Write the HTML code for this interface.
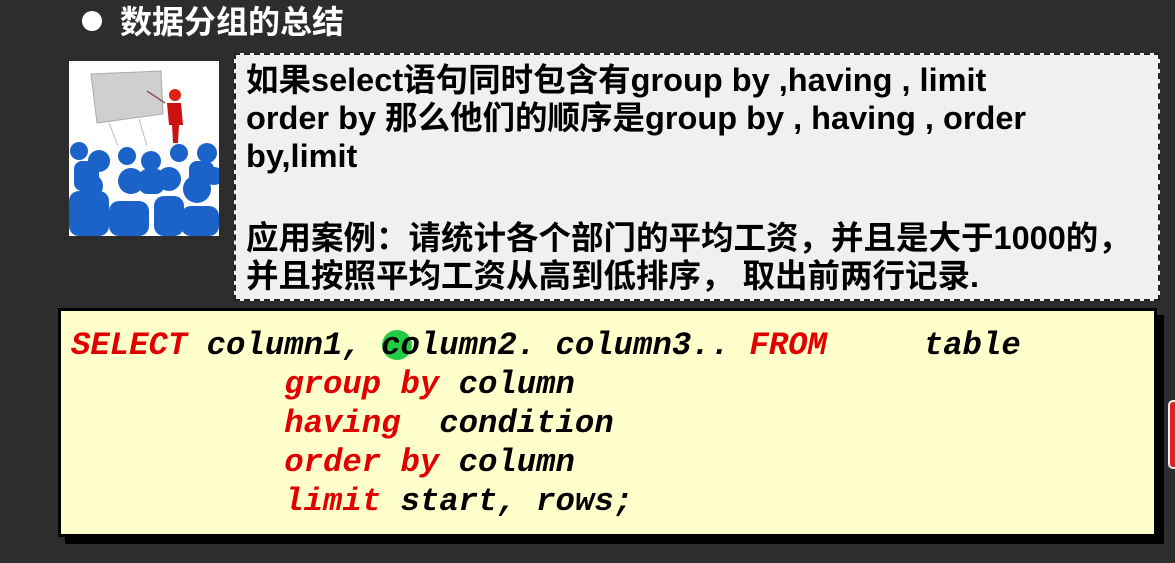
<!DOCTYPE html>
<html><head><meta charset="utf-8"><style>
*{margin:0;padding:0}
body{width:1175px;height:563px;overflow:hidden;background:#2d2d2d;position:relative;font-family:"Liberation Sans","Noto Sans CJK SC",sans-serif}
.title{position:absolute;left:82px;top:3px;color:#fff;font-weight:bold;font-size:32px;line-height:38px;white-space:nowrap}
.title .dot{display:inline-block;width:20px;height:20px;border-radius:50%;background:#fff;margin-right:18px;vertical-align:2px}
.grey{position:absolute;left:234px;top:53px;width:922px;height:244px;background:#f0f0f0;border:2px dashed #222}
.grey p{position:absolute;left:10px;font-weight:bold;font-size:32.5px;line-height:38px;color:#000;white-space:nowrap}
.yel{position:absolute;left:58px;top:308px;width:1093px;height:223px;background:#ffffcc;border:3px solid #000;box-shadow:7px 7px 0 #000}
.code{position:absolute;left:10px;top:15px;font-family:"Liberation Mono",monospace;font-weight:bold;font-style:italic;font-size:32.3px;line-height:39px;white-space:pre;color:#000}
.r{color:#e00000}
.img{position:absolute;left:69px;top:61px;width:150px;height:175px}
</style></head><body>
<div class="title"><span class="dot"></span>数据分组的总结</div>
<svg class="img" viewBox="0 0 150 175">
<rect width="150" height="175" fill="#fff"/>
<polygon points="22,13 92,10 94,53 28,62" fill="#cfcfcf" stroke="#aaa"/>
<line x1="40" y1="62" x2="49" y2="85" stroke="#bbb"/><line x1="70" y1="58" x2="78" y2="85" stroke="#bbb"/>
<line x1="78" y1="30" x2="96" y2="42" stroke="#855" stroke-width="1.5"/>
<circle cx="106" cy="34" r="6" fill="#d21"/>
<path d="M98,42 L112,42 L114,64 L110,64 L109,82 L104,82 L103,64 L100,64Z" fill="#c11"/>
<g fill="#1b63c8">
<circle cx="10" cy="90" r="9"/><circle cx="30" cy="100" r="11"/><circle cx="58" cy="95" r="9"/><circle cx="82" cy="100" r="10"/><circle cx="110" cy="92" r="9"/><circle cx="138" cy="92" r="10"/><circle cx="145" cy="115" r="9"/>
<circle cx="22" cy="125" r="12"/><circle cx="62" cy="120" r="13"/><circle cx="100" cy="118" r="12"/><circle cx="128" cy="128" r="14"/>
<rect x="0" y="130" width="40" height="45" rx="10"/><rect x="40" y="140" width="40" height="35" rx="10"/><rect x="85" y="135" width="30" height="40" rx="10"/><rect x="112" y="145" width="38" height="30" rx="10"/>
<rect x="5" y="100" width="25" height="30" rx="8"/><rect x="70" y="108" width="25" height="25" rx="8"/><rect x="120" y="100" width="25" height="25" rx="8"/>
</g>
</svg>
<div class="grey">
<p style="top:6px">如果select语句同时包含有group by ,having , limit<br>order by 那么他们的顺序是group by , having , order<br>by,limit</p>
<p style="top:164px">应用案例：请统计各个部门的平均工资，并且是大于1000的，<br>并且按照平均工资从高到低排序， 取出前两行记录.</p>
</div>
<div class="yel">
<div style="position:absolute;left:321px;top:19px;width:30px;height:30px;border-radius:50%;background:#22cc44"></div>
<div class="code"><span class="r">SELECT</span> column1, column2. column3.. <span class="r">FROM</span>     table
           <span class="r">group by</span> column
           <span class="r">having</span>  condition
           <span class="r">order by</span> column
           <span class="r">limit</span> start, rows;</div>
</div>
<div style="position:absolute;left:1168px;top:400px;width:10px;height:65px;border-radius:5px;background:#d22;border:2px solid #eee"></div>
</body></html>
